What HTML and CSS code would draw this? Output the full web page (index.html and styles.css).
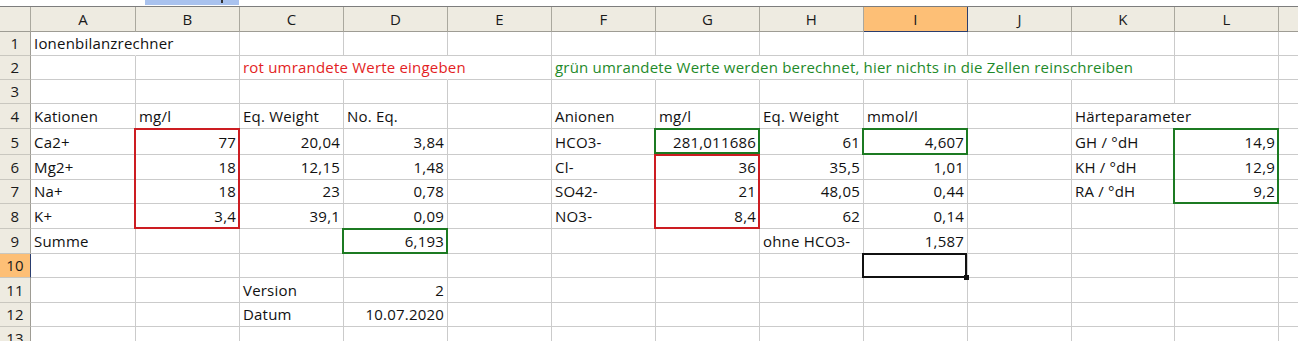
FILE: index.html
```html
<!DOCTYPE html>
<html lang="de">
<head>
<meta charset="utf-8">
<title>Ionenbilanzrechner</title>
<link rel="stylesheet" href="styles.css">
</head>
<body>
<div class="top"><div class="namesel"><span class="mark"></span></div></div>
<div class="sheet">
  <div class="row hdr">
    <div class="c corner"></div><div class="c">A</div><div class="c">B</div><div class="c">C</div><div class="c">D</div><div class="c">E</div><div class="c">F</div><div class="c">G</div><div class="c">H</div><div class="c act">I</div><div class="c">J</div><div class="c">K</div><div class="c">L</div><div class="c"></div>
  </div>
  <div class="row h24">
    <div class="c rh">1</div><div class="c sp">Ionenbilanzrechner</div><div class="c"></div><div class="c"></div><div class="c"></div><div class="c"></div><div class="c"></div><div class="c"></div><div class="c"></div><div class="c"></div><div class="c"></div><div class="c"></div><div class="c"></div><div class="c"></div>
  </div>
  <div class="row h24">
    <div class="c rh">2</div><div class="c"></div><div class="c"></div><div class="c sp red-t">rot umrandete Werte eingeben</div><div class="c sp"></div><div class="c"></div><div class="c sp grn-t">grün umrandete Werte werden berechnet, hier nichts in die Zellen reinschreiben</div><div class="c sp"></div><div class="c sp"></div><div class="c sp"></div><div class="c sp"></div><div class="c"></div><div class="c"></div><div class="c"></div>
  </div>
  <div class="row h24">
    <div class="c rh">3</div><div class="c"></div><div class="c"></div><div class="c"></div><div class="c"></div><div class="c"></div><div class="c"></div><div class="c"></div><div class="c"></div><div class="c"></div><div class="c"></div><div class="c"></div><div class="c"></div><div class="c"></div>
  </div>
  <div class="row h25">
    <div class="c rh">4</div><div class="c">Kationen</div><div class="c">mg/l</div><div class="c">Eq. Weight</div><div class="c">No. Eq.</div><div class="c"></div><div class="c">Anionen</div><div class="c">mg/l</div><div class="c">Eq. Weight</div><div class="c">mmol/l</div><div class="c"></div><div class="c sp">Härteparameter</div><div class="c"></div><div class="c"></div>
  </div>
  <div class="row h26">
    <div class="c rh">5</div><div class="c">Ca2+</div><div class="c n bx red bt bl br">77</div><div class="c n">20,04</div><div class="c n">3,84</div><div class="c"></div><div class="c">HCO3-</div><div class="c n bx grn bt bl br bb b0">281,011686</div><div class="c n">61</div><div class="c n bx grn bt bl br bb">4,607</div><div class="c"></div><div class="c">GH / °dH</div><div class="c n bx grn bt bl br">14,9</div><div class="c"></div>
  </div>
  <div class="row h25">
    <div class="c rh">6</div><div class="c">Mg2+</div><div class="c n bx red bl br">18</div><div class="c n">12,15</div><div class="c n">1,48</div><div class="c"></div><div class="c">Cl-</div><div class="c n bx red bt bl br">36</div><div class="c n">35,5</div><div class="c n">1,01</div><div class="c"></div><div class="c">KH / °dH</div><div class="c n bx grn bl br">12,9</div><div class="c"></div>
  </div>
  <div class="row h24">
    <div class="c rh">7</div><div class="c">Na+</div><div class="c n bx red bl br">18</div><div class="c n">23</div><div class="c n">0,78</div><div class="c"></div><div class="c">SO42-</div><div class="c n bx red bl br">21</div><div class="c n">48,05</div><div class="c n">0,44</div><div class="c"></div><div class="c">RA / °dH</div><div class="c n bx grn bl br bb">9,2</div><div class="c"></div>
  </div>
  <div class="row h25">
    <div class="c rh">8</div><div class="c">K+</div><div class="c n bx red bl br bb">3,4</div><div class="c n">39,1</div><div class="c n">0,09</div><div class="c"></div><div class="c">NO3-</div><div class="c n bx red bl br bb">8,4</div><div class="c n">62</div><div class="c n">0,14</div><div class="c"></div><div class="c"></div><div class="c"></div><div class="c"></div>
  </div>
  <div class="row h25">
    <div class="c rh">9</div><div class="c">Summe</div><div class="c"></div><div class="c"></div><div class="c n bx grn bt bl br bb">6,193</div><div class="c"></div><div class="c"></div><div class="c"></div><div class="c">ohne HCO3-</div><div class="c n">1,587</div><div class="c"></div><div class="c"></div><div class="c"></div><div class="c"></div>
  </div>
  <div class="row h24">
    <div class="c rh act">10</div><div class="c"></div><div class="c"></div><div class="c"></div><div class="c"></div><div class="c"></div><div class="c"></div><div class="c"></div><div class="c"></div><div class="c sel"></div><div class="c"></div><div class="c"></div><div class="c"></div><div class="c"></div>
  </div>
  <div class="row h25">
    <div class="c rh">11</div><div class="c"></div><div class="c"></div><div class="c">Version</div><div class="c n">2</div><div class="c"></div><div class="c"></div><div class="c"></div><div class="c"></div><div class="c"></div><div class="c"></div><div class="c"></div><div class="c"></div><div class="c"></div>
  </div>
  <div class="row h24">
    <div class="c rh">12</div><div class="c"></div><div class="c"></div><div class="c">Datum</div><div class="c n">10.07.2020</div><div class="c"></div><div class="c"></div><div class="c"></div><div class="c"></div><div class="c"></div><div class="c"></div><div class="c"></div><div class="c"></div><div class="c"></div>
  </div>
  <div class="row h24">
    <div class="c rh">13</div><div class="c"></div><div class="c"></div><div class="c"></div><div class="c"></div><div class="c"></div><div class="c"></div><div class="c"></div><div class="c"></div><div class="c"></div><div class="c"></div><div class="c"></div><div class="c"></div><div class="c"></div>
  </div>
</div>
</body>
</html>
```
FILE: styles.css
```css
html, body {
  margin: 0;
  padding: 0;
  background: #ffffff;
  overflow: hidden;
}
body {
  width: 1298px;
  height: 341px;
  font-family: "Open Sans", "Lato", "Liberation Sans", sans-serif;
  font-size: 15px;
  letter-spacing: 0.2px;
  color: #111111;
}
.top {
  height: 6px;
  border-bottom: 1px solid #7d7d7d;
  display: flex;
  align-items: flex-start;
}
.namesel {
  margin-left: 145px;
  width: 94px;
  height: 5px;
  background: #a9c2ee;
  display: flex;
}
.mark {
  margin-left: 76px;
  width: 2px;
  height: 3px;
  background: #333333;
}
.sheet {
  width: 1298px;
  overflow: hidden;
}
.row {
  display: grid;
  grid-template-columns: 31px 105px repeat(9, 104px) 103px 104px 104px;
}
.h24 { height: 24px; }
.h25 { height: 25px; }
.h26 { height: 26px; }
.c {
  box-sizing: border-box;
  border-right: 1px solid #cbcbcb;
  border-bottom: 1px solid #cbcbcb;
  padding: 0 3px 4px 3px;
  line-height: 16px;
  white-space: nowrap;
  display: flex;
  align-items: flex-end;
  min-width: 0;
}
.n { justify-content: flex-end; }
.sp { border-right-color: transparent; }
.red-t { color: #e31e24; }
.grn-t { color: #1e8a2a; }
.hdr { height: 25px; }
.hdr .c {
  background: #eeebe1;
  border-right-color: #aaa89e;
  border-bottom-color: #9e9c94;
  justify-content: center;
  padding-bottom: 4px;
  color: #1a1a1a;
}
.hdr .act {
  background: #fdbf76;
  border-right-color: #2a3d6e;
  border-bottom-color: #2a3d6e;
}
.rh {
  background: #eeebe1;
  border-right-color: #9e9c94;
  border-bottom-color: #c9c7bf;
  justify-content: center;
  color: #1a1a1a;
}
.rh.act {
  background: #fdbf76;
  border-right-color: #2a3d6e;
}
.bx { position: relative; }
.bx::after {
  content: "";
  position: absolute;
  left: -2px;
  right: -1px;
  top: -1px;
  bottom: -1px;
  border: 0 solid transparent;
  pointer-events: none;
}
.red::after { border-color: #cc1d22; }
.grn::after { border-color: #1c7a22; }
.bt::after { border-top-width: 2px; }
.bl::after { border-left-width: 2px; }
.br::after { border-right-width: 2px; }
.bb::after { border-bottom-width: 2px; }
.b0::after { bottom: 0; }
.sel { position: relative; }
.sel::after {
  content: "";
  position: absolute;
  left: -2px;
  right: 0;
  top: -1px;
  bottom: -1px;
  border: 2px solid #111111;
}
.sel::before {
  content: "";
  position: absolute;
  right: -2px;
  bottom: -3px;
  width: 5px;
  height: 5px;
  background: #111111;
  z-index: 1;
}
```
